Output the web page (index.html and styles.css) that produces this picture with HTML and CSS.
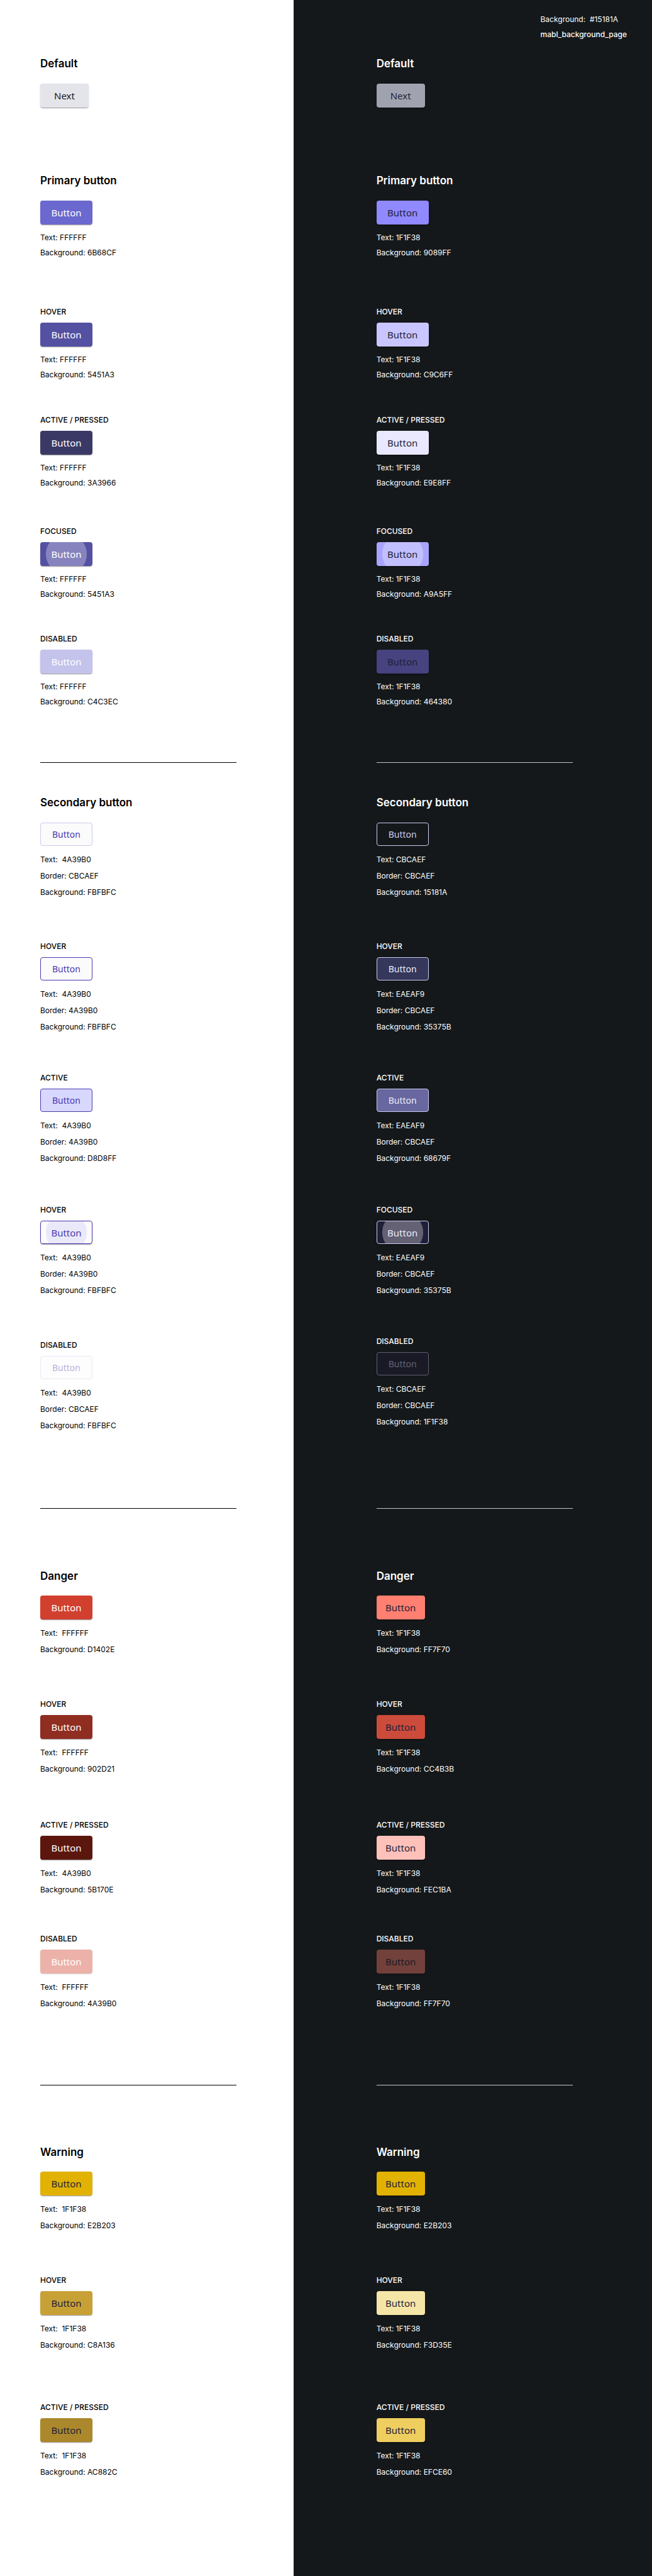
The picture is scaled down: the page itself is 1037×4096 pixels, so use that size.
FILE: index.html
```html
<!DOCTYPE html>
<html lang="en">
<head>
<meta charset="utf-8">
<title>Button styles</title>
<link rel="stylesheet" href="styles.css">
</head>
<body>
<main class="page">
  <div class="panel light">
    <section class="group default">
      <h2>Default</h2>
      <button class="btn small">Next</button>
    </section>
    <section class="group primary">
      <h2>Primary button</h2>
      <div class="state base"><button class="btn">Button</button><div class="specs"><p>Text: FFFFFF</p><p>Background: 6B68CF</p></div></div>
      <div class="state hover"><h3>HOVER</h3><button class="btn">Button</button><div class="specs"><p>Text: FFFFFF</p><p>Background: 5451A3</p></div></div>
      <div class="state active"><h3>ACTIVE / PRESSED</h3><button class="btn">Button</button><div class="specs"><p>Text: FFFFFF</p><p>Background: 3A3966</p></div></div>
      <div class="state focused"><h3>FOCUSED</h3><button class="btn">Button</button><div class="specs"><p>Text: FFFFFF</p><p>Background: 5451A3</p></div></div>
      <div class="state disabled"><h3>DISABLED</h3><button class="btn" disabled>Button</button><div class="specs"><p>Text: FFFFFF</p><p>Background: C4C3EC</p></div></div>
    </section>
    <hr>
    <section class="group secondary">
      <h2>Secondary button</h2>
      <div class="state base"><button class="btn">Button</button><div class="specs"><p>Text:&nbsp; 4A39B0</p><p>Border: CBCAEF</p><p>Background: FBFBFC</p></div></div>
      <div class="state hover"><h3>HOVER</h3><button class="btn">Button</button><div class="specs"><p>Text:&nbsp; 4A39B0</p><p>Border: 4A39B0</p><p>Background: FBFBFC</p></div></div>
      <div class="state active"><h3>ACTIVE</h3><button class="btn">Button</button><div class="specs"><p>Text:&nbsp; 4A39B0</p><p>Border: 4A39B0</p><p>Background: D8D8FF</p></div></div>
      <div class="state focused"><h3>HOVER</h3><button class="btn">Button</button><div class="specs"><p>Text:&nbsp; 4A39B0</p><p>Border: 4A39B0</p><p>Background: FBFBFC</p></div></div>
      <div class="state disabled"><h3>DISABLED</h3><button class="btn" disabled>Button</button><div class="specs"><p>Text:&nbsp; 4A39B0</p><p>Border: CBCAEF</p><p>Background: FBFBFC</p></div></div>
    </section>
    <hr>
    <section class="group danger">
      <h2>Danger</h2>
      <div class="state base"><button class="btn">Button</button><div class="specs"><p>Text:&nbsp; FFFFFF</p><p>Background: D1402E</p></div></div>
      <div class="state hover"><h3>HOVER</h3><button class="btn">Button</button><div class="specs"><p>Text:&nbsp; FFFFFF</p><p>Background: 902D21</p></div></div>
      <div class="state active"><h3>ACTIVE / PRESSED</h3><button class="btn">Button</button><div class="specs"><p>Text:&nbsp; 4A39B0</p><p>Background: 5B170E</p></div></div>
      <div class="state disabled"><h3>DISABLED</h3><button class="btn" disabled>Button</button><div class="specs"><p>Text:&nbsp; FFFFFF</p><p>Background: 4A39B0</p></div></div>
    </section>
    <hr>
    <section class="group warning">
      <h2>Warning</h2>
      <div class="state base"><button class="btn">Button</button><div class="specs"><p>Text:&nbsp; 1F1F38</p><p>Background: E2B203</p></div></div>
      <div class="state hover"><h3>HOVER</h3><button class="btn">Button</button><div class="specs"><p>Text:&nbsp; 1F1F38</p><p>Background: C8A136</p></div></div>
      <div class="state active"><h3>ACTIVE / PRESSED</h3><button class="btn">Button</button><div class="specs"><p>Text:&nbsp; 1F1F38</p><p>Background: AC882C</p></div></div>
    </section>
  </div>

  <div class="panel dark">
    <header class="note">
      <p>Background:&nbsp; #15181A</p>
      <p class="token">mabl_background_page</p>
    </header>
    <section class="group default">
      <h2>Default</h2>
      <button class="btn small">Next</button>
    </section>
    <section class="group primary">
      <h2>Primary button</h2>
      <div class="state base"><button class="btn">Button</button><div class="specs"><p>Text: 1F1F38</p><p>Background: 9089FF</p></div></div>
      <div class="state hover"><h3>HOVER</h3><button class="btn">Button</button><div class="specs"><p>Text: 1F1F38</p><p>Background: C9C6FF</p></div></div>
      <div class="state active"><h3>ACTIVE / PRESSED</h3><button class="btn">Button</button><div class="specs"><p>Text: 1F1F38</p><p>Background: E9E8FF</p></div></div>
      <div class="state focused"><h3>FOCUSED</h3><button class="btn">Button</button><div class="specs"><p>Text: 1F1F38</p><p>Background: A9A5FF</p></div></div>
      <div class="state disabled"><h3>DISABLED</h3><button class="btn" disabled>Button</button><div class="specs"><p>Text: 1F1F38</p><p>Background: 464380</p></div></div>
    </section>
    <hr>
    <section class="group secondary">
      <h2>Secondary button</h2>
      <div class="state base"><button class="btn">Button</button><div class="specs"><p>Text: CBCAEF</p><p>Border: CBCAEF</p><p>Background: 15181A</p></div></div>
      <div class="state hover"><h3>HOVER</h3><button class="btn">Button</button><div class="specs"><p>Text: EAEAF9</p><p>Border: CBCAEF</p><p>Background: 35375B</p></div></div>
      <div class="state active"><h3>ACTIVE</h3><button class="btn">Button</button><div class="specs"><p>Text: EAEAF9</p><p>Border: CBCAEF</p><p>Background: 68679F</p></div></div>
      <div class="state focused"><h3>FOCUSED</h3><button class="btn">Button</button><div class="specs"><p>Text: EAEAF9</p><p>Border: CBCAEF</p><p>Background: 35375B</p></div></div>
      <div class="state disabled"><h3>DISABLED</h3><button class="btn" disabled>Button</button><div class="specs"><p>Text: CBCAEF</p><p>Border: CBCAEF</p><p>Background: 1F1F38</p></div></div>
    </section>
    <hr>
    <section class="group danger">
      <h2>Danger</h2>
      <div class="state base"><button class="btn small">Button</button><div class="specs"><p>Text: 1F1F38</p><p>Background: FF7F70</p></div></div>
      <div class="state hover"><h3>HOVER</h3><button class="btn small">Button</button><div class="specs"><p>Text: 1F1F38</p><p>Background: CC4B3B</p></div></div>
      <div class="state active"><h3>ACTIVE / PRESSED</h3><button class="btn small">Button</button><div class="specs"><p>Text: 1F1F38</p><p>Background: FEC1BA</p></div></div>
      <div class="state disabled"><h3>DISABLED</h3><button class="btn small" disabled>Button</button><div class="specs"><p>Text: 1F1F38</p><p>Background: FF7F70</p></div></div>
    </section>
    <hr>
    <section class="group warning">
      <h2>Warning</h2>
      <div class="state base"><button class="btn small">Button</button><div class="specs"><p>Text: 1F1F38</p><p>Background: E2B203</p></div></div>
      <div class="state hover"><h3>HOVER</h3><button class="btn small">Button</button><div class="specs"><p>Text: 1F1F38</p><p>Background: F3D35E</p></div></div>
      <div class="state active"><h3>ACTIVE / PRESSED</h3><button class="btn small">Button</button><div class="specs"><p>Text: 1F1F38</p><p>Background: EFCE60</p></div></div>
    </section>
  </div>
</main>
</body>
</html>
```
FILE: styles.css
```css
* {
  box-sizing: border-box;
}

body {
  margin: 0;
  font-family: Inter, "Liberation Sans", sans-serif;
  font-size: 12px;
}

h2, h3, p {
  margin: 0;
}

.page {
  display: grid;
  grid-template-columns: 45fr 55fr;
}

/* Theme panels */
.panel {
  display: flex;
  flex-direction: column;
}

.light {
  padding: 89px 40px 152px 64px;
  background: #fff;
  color: #000;
}

.dark {
  padding: 19px 40px 152px 132px;
  background: #15181a;
  color: #fff;
}

.note {
  align-self: flex-end;
  margin-bottom: 22px;
  line-height: 24px;
}

.token {
  font-weight: 500;
}

hr {
  width: 312px;
  height: 1px;
  margin: 0;
  border: 0;
  background: #000;
}

.dark hr {
  background: #c4c4c8;
}

/* Groups and states */
.group {
  display: flex;
  flex-direction: column;
  align-items: flex-start;
}

h2 {
  margin-bottom: 20px;
  font-size: 17px;
  font-weight: 600;
  line-height: 24px;
}

h3 {
  font-size: 12px;
  font-weight: 500;
  line-height: 16px;
}

.state {
  display: flex;
  flex-direction: column;
  align-items: flex-start;
  gap: 9px;
}

.specs {
  line-height: 26px;
}

.primary { margin: 104px 0 84px; }
.primary .specs { line-height: 24px; }
.primary .hover { margin-top: 74px; }
.primary .active { margin-top: 52px; }
.primary .focused { margin-top: 57px; }
.primary .disabled { margin-top: 51px; }

.secondary { margin: 51px 0 118px; }
.secondary .hover { margin-top: 65px; }
.secondary .active { margin-top: 60px; }
.secondary .focused { margin-top: 61px; }
.secondary .disabled { margin-top: 66px; }
.dark .secondary { margin-bottom: 124px; }
.dark .secondary .disabled { margin-top: 60px; }

.danger { margin: 95px 0 116px; }
.danger h2 { margin-bottom: 19px; }
.danger .hover { margin-top: 66px; }
.danger .active { margin-top: 68px; }
.danger .disabled { margin-top: 57px; }

.warning { margin-top: 94px; }
.warning h2 { margin-bottom: 19px; }
.warning .hover { margin-top: 66px; }
.warning .active { margin-top: 78px; }

/* Buttons */
.btn {
  width: 83px;
  height: 38px;
  padding: 0;
  border: 0;
  border-radius: 4px;
  background: var(--fill);
  color: var(--ink);
  box-shadow: 0 2px 1px -1px rgba(0, 0, 0, 0.2), 0 1px 1px rgba(0, 0, 0, 0.14), 0 1px 3px rgba(0, 0, 0, 0.12);
  font-family: "Noto Sans", "Open Sans", sans-serif;
  font-size: 15px;
  line-height: 20px;
}

.btn.small {
  width: 77px;
}

.light .default { --fill: #e4e5ea; --ink: #15181a; }
.dark .default { --fill: #a0a3af; --ink: #1f1f38; }

.light .primary { --fill: #6b68cf; --ink: #fff; }
.light .primary .hover { --fill: #5451a3; }
.light .primary .active { --fill: #3a3966; }
.light .primary .focused { --fill: radial-gradient(circle at center, #8683be 32px, #5451a3 33px); }
.light .primary .disabled { --fill: #c4c3ec; }

.dark .primary { --fill: #9089ff; --ink: #1f1f38; }
.dark .primary .hover { --fill: #c9c6ff; }
.dark .primary .active { --fill: #e9e8ff; }
.dark .primary .focused { --fill: radial-gradient(circle at center, #c2bfff 32px, #a9a5ff 33px); }
.dark .primary .disabled { --fill: #464380; }

.secondary .btn {
  height: 37px;
  border: 1px solid var(--line);
  box-shadow: none;
  font-size: 14px;
}

.secondary .focused .btn {
  box-shadow: 0 2px 1px -1px rgba(0, 0, 0, 0.2), 0 1px 1px rgba(0, 0, 0, 0.14), 0 1px 3px rgba(0, 0, 0, 0.12);
  font-size: 15px;
}

.light .secondary { --fill: #fbfbfc; --ink: #4a39b0; --line: #4a39b0; }
.light .secondary .base,
.light .secondary .disabled { --line: #cbcaef; }
.light .secondary .active { --fill: #d8d8ff; }
.light .secondary .focused { --fill: radial-gradient(circle at center, #eae9fa 32px, #fbfbfc 33px); }

.dark .secondary { --fill: #15181a; --ink: #eaeaf9; --line: #cbcaef; }
.dark .secondary .base { --ink: #cbcaef; }
.dark .secondary .hover { --fill: #35375b; }
.dark .secondary .active { --fill: #68679f; }
.dark .secondary .focused { --fill: radial-gradient(circle at center, #636173 32px, #1f1f38 33px); }
.dark .secondary .disabled { --fill: #1f1f38; --ink: #cbcaef; }

.light .danger { --fill: #d1402e; --ink: #fff; }
.light .danger .hover { --fill: #902d21; }
.light .danger .active { --fill: #5b170e; }

.dark .danger { --fill: #ff7f70; --ink: #1f1f38; }
.dark .danger .hover { --fill: #cc4b3b; }
.dark .danger .active { --fill: #fec1ba; }

.light .danger .disabled { --fill: #d1402e; }
.dark .danger .disabled { --fill: #ff7f70; }

.secondary .btn:disabled,
.danger .btn:disabled {
  opacity: 0.4;
}

.warning { --fill: #e2b203; --ink: #1f1f38; }
.light .warning .hover { --fill: #c8a136; }
.light .warning .active { --fill: #ac882c; }
.dark .warning .hover { --fill: #f5e6a8; }
.dark .warning .active { --fill: #efce60; }
```
